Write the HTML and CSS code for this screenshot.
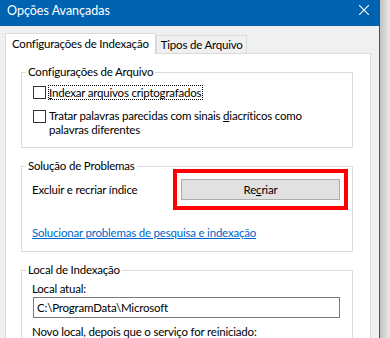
FILE: index.html
```html
<!DOCTYPE html>
<html lang="pt-BR">
<head>
  <meta charset="UTF-8" />
  <meta name="viewport" content="width=device-width, initial-scale=1.0"/>
  <title>Opções Avançadas</title>
  <link rel="stylesheet" href="styles.css">
</head>
<body>
  <div class="window">
    <div class="titlebar">
      <span class="title">Opções Avançadas</span>
      <svg class="close" width="10" height="10" viewBox="0 0 10 10">
        <path d="M0 0L10 10M10 0L0 10" stroke="#fff" stroke-width="1.1" fill="none"/>
      </svg>
    </div>

    <div class="client">
      <div class="tabs">
        <div class="tab active">Configurações de Indexação</div>
        <div class="tab">Tipos de Arquivo</div>
      </div>

      <div class="panel">
        <fieldset class="group">
          <legend>Configurações de Arquivo</legend>
          <label class="check">
            <span class="box"></span>
            <span class="focus"><u>I</u>ndexar arquivos criptografados</span>
          </label>
          <label class="check">
            <span class="box"></span>
            <span class="wrap">Tratar palavras parecidas com sinais <u>d</u>iacríticos como<br>palavras diferentes</span>
          </label>
        </fieldset>

        <fieldset class="group">
          <legend>Solução de Problemas</legend>
          <div class="rebuild-row">
            <span class="rebuild-label">Excluir e recriar índice</span>
            <button class="btn highlighted">Re<u>c</u>riar</button>
          </div>
          <a class="link" href="#">Solucionar problemas de pesquisa e indexação</a>
        </fieldset>

        <fieldset class="group">
          <legend>Local de Indexação</legend>
          <div class="field-label">Local atual:</div>
          <div class="textbox">C:\ProgramData\Microsoft</div>
          <div class="field-label next">Novo local, depois que o serviço for reiniciado:</div>
        </fieldset>
      </div>
    </div>
  </div>
  <div class="shadow"></div>
</body>
</html>
```

FILE: styles.css
```css
body {
  margin: 0;
  height: 338px;
  overflow: hidden;
  display: flex;
  font-family: Lato, "Noto Sans", sans-serif;
  font-size: 11.5px;
  letter-spacing: -0.2px;
  color: #000;
}

.window {
  width: 379px;
  flex: none;
  background: #f0f0f0;
  border-right: 1px solid #0063b1;
}

.shadow {
  flex: 1;
  background: linear-gradient(to right, #c2c2c2, #e9e9e9);
}

.titlebar {
  height: 26px;
  background: #0063b1;
  color: #fff;
  display: flex;
  justify-content: space-between;
  align-items: flex-start;
  padding: 3px 10px 0 7px;
  box-sizing: border-box;
  line-height: 16px;
  font-size: 12.5px;
  letter-spacing: 0;
}

.close {
  margin-top: 2px;
}

.client {
  padding: 7px 8px 0 5px;
}

/* tabs */
.tabs {
  display: flex;
  align-items: flex-end;
  height: 20px;
}

.tab {
  height: 18px;
  line-height: 17px;
  padding: 0 3px 0 4px;
  border: 1px solid #d9d9d9;
  border-bottom: none;
  box-sizing: border-box;
}

.tab.active {
  height: 21px;
  line-height: 20px;
  padding: 0 6px;
  background: #fff;
  margin-bottom: -1px;
  position: relative;
  z-index: 1;
}

.panel {
  background: #fff;
  border: 1px solid #d9d9d9;
  height: 300px;
  padding: 10px 17px 0 15px;
}

/* group boxes */
.group {
  width: 332px;
  box-sizing: border-box;
  margin: 0;
  padding: 6px 12px 10px 10px;
  border: 1px solid #dcdcdc;
  min-inline-size: 0;
}

.group + .group {
  margin-top: 10px;
}

.group legend {
  margin-left: -6px;
  padding: 0 2px;
  line-height: 16px;
}

.check {
  display: flex;
  align-items: flex-start;
  line-height: 13px;
  margin-left: 1px;
}

.check + .check {
  margin-top: 11px;
}

.wrap {
  white-space: nowrap;
  line-height: 14px;
  margin-top: -1px;
}

.box {
  width: 13px;
  height: 13px;
  box-sizing: border-box;
  border: 1px solid #333;
  background: #fff;
  flex: none;
  margin-right: 3px;
}

.focus {
  outline: 1px dotted #000;
  outline-offset: 0;
  padding-right: 1px;
}

.rebuild-row {
  display: flex;
  justify-content: space-between;
  align-items: center;
  margin-top: -1px;
}

.btn {
  width: 159px;
  height: 21px;
  background: #e1e1e1;
  border: 1px solid #adadad;
  font: inherit;
  letter-spacing: inherit;
  color: #000;
  padding: 0;
  position: relative;
}

/* red annotation frame around the button */
.highlighted::after {
  content: "";
  position: absolute;
  top: -11px;
  bottom: -11px;
  left: -9px;
  right: -9px;
  border: 4px solid #f00;
}

.link {
  display: block;
  margin-top: 25px;
  color: #0066cc;
  line-height: 16px;
}

.field-label {
  line-height: 16px;
  margin-top: -3px;
}

.field-label.next {
  margin-top: 6px;
}

.textbox {
  height: 21px;
  box-sizing: border-box;
  border: 1px solid #7a7a7a;
  margin-left: 1px;
  padding-left: 3px;
  line-height: 19px;
}
```
